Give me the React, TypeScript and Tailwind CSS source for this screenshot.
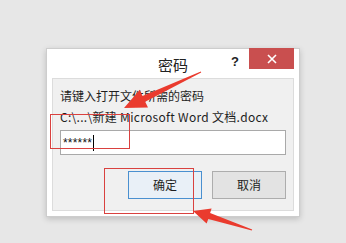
export default function App() {
  const font = { fontFamily: '"Microsoft YaHei", "Noto Sans CJK SC", "Liberation Sans", sans-serif' };

  return (
    <div className="relative w-[346px] h-[243px] overflow-hidden bg-[#e7e7e7] pt-[48px] pl-[46px]" style={font}>
      {/* dialog */}
      <div className="w-[254px] h-[169px] bg-white border border-[#cdcdcd] shadow-[0_2px_6px_rgba(0,0,0,0.18)] flex flex-col">
        <div className="h-[29px] flex items-start">
          <div className="flex-1" />
          <div className="text-[15px] leading-[29px] text-[#222] pt-[1px]">密码</div>
          <div className="flex-1 flex justify-end items-start">
            <span className="text-[13px] leading-[20px] font-bold text-[#222] mt-[3px] mr-[10px]" style={{ fontFamily: '"Liberation Sans", sans-serif' }}>?</span>
            <div className="w-[45px] h-[21px] bg-[#c94f4f] mr-[5px] -mt-[1px] flex items-center justify-center">
              <svg width="10" height="10" viewBox="0 0 10 10">
                <path d="M1 1 L9 9 M9 1 L1 9" stroke="white" strokeWidth="1.6" />
              </svg>
            </div>
          </div>
        </div>

        <div className="mx-[5px] h-[133px] bg-[#f0f0f0] border border-[#dcdcdc] pt-[6px] pl-[7px] pr-[7px] flex flex-col">
          <div className="text-[12px] leading-[21px] text-[#1e1e1e] whitespace-nowrap">请键入打开文件所需的密码</div>
          <div className="text-[12px] leading-[21px] text-[#1e1e1e] whitespace-nowrap tracking-[0.3px]">C:\...\新建 Microsoft Word 文档.docx</div>
          <div className="mt-[3px] h-[25px] bg-white border border-[#a9a9a9] flex items-center pl-[2px]">
            <span className="text-[12px] text-[#111] leading-none tracking-[0.2px]" style={{ fontFamily: '"Liberation Sans", sans-serif' }}>******</span>
            <span className="w-px h-[16px] bg-black ml-[1px]" />
          </div>
          <div className="mt-[16px] flex justify-end gap-[10px]">
            <div className="w-[74px] h-[28px] border border-[#4a90d0] bg-[#e9f0f7] flex items-center justify-center text-[12px] text-[#1e1e1e]">确定</div>
            <div className="w-[74px] h-[28px] border border-[#adadad] bg-[#e3e3e3] flex items-center justify-center text-[12px] text-[#1e1e1e]">取消</div>
          </div>
        </div>
      </div>

      {/* annotations */}
      <div className="absolute left-[50px] top-[114px] w-[80px] h-[35px] border border-[#d9413f]" />
      <div className="absolute left-[104px] top-[168px] w-[90px] h-[46px] border border-[#d9413f]" />
      <svg className="absolute left-0 top-0" width="346" height="243" viewBox="0 0 346 243">
        <polygon
          fill="#ea3b2e"
          points="200.8,71.5 142.5,96 139.8,89.8 124,108 148,107.5 145.2,101.8 201.2,72.5"
        />
        <polygon
          fill="#ea3b2e"
          points="252.2,229.5 210.1,213.1 211.6,208.5 193,211 206.6,223.5 208.3,218.9 251.8,230.5"
        />
      </svg>
    </div>
  );
}
